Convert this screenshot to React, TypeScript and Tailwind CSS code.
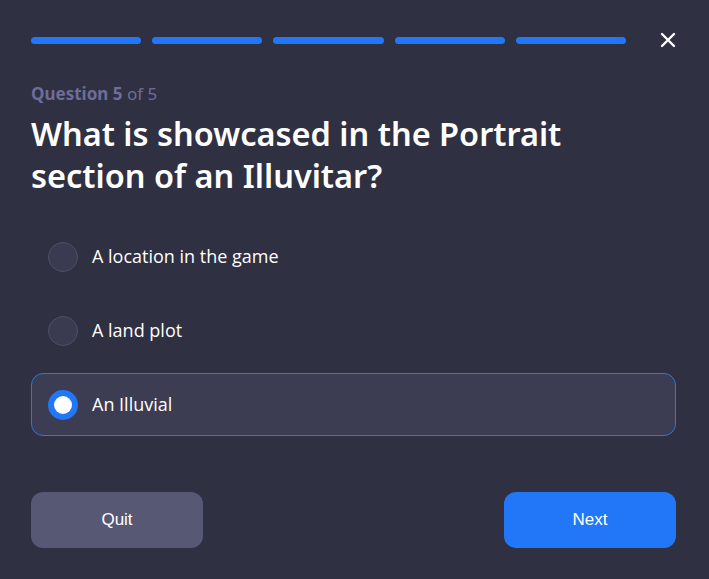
import * as React from "react";

const options = ["A location in the game", "A land plot", "An Illuvial"];

export default function App() {
  const [selected, setSelected] = React.useState(2);

  return (
    <div className="w-[709px] h-[579px] bg-[#2f3042] pl-[31px] pr-[33px] pt-[32px] text-white [font-family:'Noto_Sans',sans-serif]">
      <div className="flex items-center">
        <div className="flex w-[595px] gap-[11px]">
          {[0, 1, 2, 3, 4].map((i) => (
            <div key={i} className="h-[7px] flex-1 rounded-full bg-[#2177f5]" />
          ))}
        </div>
        <button className="ml-auto flex h-[16px] w-[16px] items-center justify-center">
          <svg width="16" height="16" viewBox="0 0 16 16" fill="none">
            <path d="M2 2L14 14M14 2L2 14" stroke="white" strokeWidth="2.4" strokeLinecap="round" />
          </svg>
        </button>
      </div>

      <p className="mt-[34px] text-[17px] leading-[24px] text-[#6e6d9a]">
        <span className="font-bold">Question 5</span> of 5
      </p>
      <h1 className="mt-[7px] text-[32.5px] font-semibold leading-[42px] text-white">
        What is showcased in the Portrait
        <br />
        section of an Illuvitar?
      </h1>

      <div className="mt-[28px] flex flex-col gap-[11px]">
        {options.map((opt, i) => {
          const active = i === selected;
          return (
            <button
              key={opt}
              onClick={() => setSelected(i)}
              className={
                active
                  ? "flex h-[63px] items-center gap-[14px] rounded-[12px] border border-[#2177f5] bg-[#3c3d53] px-[16px] text-left"
                  : "flex h-[63px] items-center gap-[14px] rounded-[12px] border border-transparent px-[16px] text-left"
              }
            >
              {active ? (
                <span className="flex h-[30px] w-[30px] items-center justify-center rounded-full bg-[#2177f5]">
                  <span className="h-[18px] w-[18px] rounded-full bg-white" />
                </span>
              ) : (
                <span className="h-[30px] w-[30px] rounded-full border border-[#4e4f6a] bg-[#3a3b50]" />
              )}
              <span className="text-[18px] text-white [font-family:'Open_Sans',sans-serif]">{opt}</span>
            </button>
          );
        })}
      </div>

      <div className="mt-[56px] flex justify-between [font-family:'Liberation_Sans',Arial,sans-serif]">
        <button className="h-[56px] w-[172px] rounded-[12px] bg-[#575873] text-[17px] text-white">Quit</button>
        <button className="h-[56px] w-[172px] rounded-[12px] bg-[#2177f8] text-[17px] text-white">Next</button>
      </div>
    </div>
  );
}
